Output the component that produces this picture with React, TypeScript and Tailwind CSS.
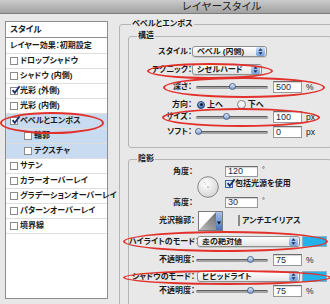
import React from 'react';

type Effect = { label: string; checked?: boolean; sub?: boolean; selected?: boolean };

const effects: Effect[] = [
  { label: 'ドロップシャドウ' },
  { label: 'シャドウ (内側)' },
  { label: '光彩 (外側)', checked: true },
  { label: '光彩 (内側)' },
  { label: 'ベベルとエンボス', checked: true, selected: true },
  { label: '輪郭', sub: true, selected: true },
  { label: 'テクスチャ', sub: true, selected: true },
  { label: 'サテン' },
  { label: 'カラーオーバーレイ' },
  { label: 'グラデーションオーバーレイ' },
  { label: 'パターンオーバーレイ' },
  { label: '境界線' },
];

const CheckMark = () => (
  <svg className="absolute -top-[3px] left-[0px] w-[10px] h-[10px]" viewBox="0 0 10 10">
    <path d="M1.6 5.2 L3.8 7.8 L8.6 1.2" stroke="#1b2d66" strokeWidth="1.8" fill="none" />
  </svg>
);

function Box({ checked, blue }: { checked?: boolean; blue?: boolean }) {
  return (
    <span
      className={`relative shrink-0 w-[8px] h-[8px] border ${
        blue ? 'border-[#3d62a8] bg-[#d9e6f7]' : 'border-[#8a8a8a] bg-white'
      }`}
    >
      {checked && <CheckMark />}
    </span>
  );
}

function Arrows() {
  return (
    <svg width="5" height="7" viewBox="0 0 5 7">
      <path d="M2.5 0.3 L4.6 2.7 L0.4 2.7 Z" fill="#1d2f57" />
      <path d="M2.5 6.7 L4.6 4.3 L0.4 4.3 Z" fill="#1d2f57" />
    </svg>
  );
}

function Select({ value, className }: { value: string; className: string }) {
  return (
    <div
      className={`flex items-center h-[11px] rounded-[3px] border border-[#8e8e8e] bg-gradient-to-b from-white to-[#e4e4e4] shadow-[0_1px_0_rgba(0,0,0,0.12)] ${className}`}
    >
      <span className="flex-1 pl-[4px] leading-none font-bold whitespace-nowrap overflow-hidden">{value}</span>
      <span className="w-[9px] h-[9px] mr-[1px] rounded-[2px] bg-gradient-to-b from-[#cfe2f8] to-[#6f9fdc] flex items-center justify-center">
        <Arrows />
      </span>
    </div>
  );
}

function Slider({ pct }: { pct: number }) {
  return (
    <div className="relative shrink-0 w-[72px] h-[12px]">
      <div className="absolute left-0 right-0 top-[5px] h-[3px] rounded-full bg-[#a3a3a3] border-t border-[#5f5f5f]" />
      <div
        className="absolute top-[2px] -ml-[3.5px] w-[7px] h-[7px] rounded-full border border-[#4b638c] bg-gradient-to-b from-[#e2ecf8] to-[#7c9ccb]"
        style={{ left: `${pct}%` }}
      />
    </div>
  );
}

function Field({ value, className }: { value: string; className: string }) {
  return (
    <div
      className={`shrink-0 flex items-center pl-[2px] bg-white border border-[#999] border-t-[#6c6c6c] shadow-[inset_0_1px_1px_rgba(0,0,0,0.18)] text-[9px] leading-none text-[#1e2a44] ${className}`}
    >
      {value}
    </div>
  );
}

function SliderRow({
  label,
  labelW,
  pct,
  value,
  unit,
  className,
}: {
  label: string;
  labelW: string;
  pct: number;
  value: string;
  unit: string;
  className: string;
}) {
  return (
    <div className={`flex items-center h-[12px] ${className}`}>
      <span className={`shrink-0 text-right font-bold leading-none ${labelW}`}>{label}</span>
      <div className={labelW === 'w-[63px]' ? 'ml-[4px]' : 'ml-[1px]'}>
        <Slider pct={pct} />
      </div>
      <Field value={value} className="ml-[5px] w-[29px] h-[12px]" />
      <span className="ml-[4px] leading-none text-[8.5px]">{unit}</span>
    </div>
  );
}

function Dial() {
  return (
    <svg width="22" height="22" viewBox="0 0 22 22">
      <defs>
        <radialGradient id="dialg" cx="40%" cy="35%" r="70%">
          <stop offset="0" stopColor="#ffffff" />
          <stop offset="1" stopColor="#d4d4d4" />
        </radialGradient>
      </defs>
      <circle cx="11" cy="11" r="10.3" fill="url(#dialg)" stroke="#7b7b7b" strokeWidth="0.9" />
      <circle cx="11" cy="11" r="0.7" fill="#888" />
      <circle cx="8.6" cy="8" r="0.5" fill="#999" />
      <circle cx="7.2" cy="6.3" r="0.5" fill="#999" />
    </svg>
  );
}

function Contour() {
  return (
    <div className="flex h-[20px] border border-[#7a7a7a] bg-white">
      <svg width="17" height="18" viewBox="0 0 17 18">
        <defs>
          <linearGradient id="contg" x1="0" y1="1" x2="1" y2="0">
            <stop offset="0" stopColor="#bdbdbd" />
            <stop offset="1" stopColor="#6c6c6c" />
          </linearGradient>
        </defs>
        <rect width="17" height="18" fill="#fff" />
        <polygon points="0,18 17,0 17,18" fill="url(#contg)" />
      </svg>
      <div className="w-[6px] bg-gradient-to-b from-[#a9c3e8] to-[#4a72b8] flex items-center justify-center pt-[3px]">
        <svg width="4" height="4" viewBox="0 0 4 4">
          <path d="M0 0.5 L4 0.5 L2 3.5 Z" fill="#111" />
        </svg>
      </div>
    </div>
  );
}

export default function App() {
  return (
    <div className="relative w-[330px] h-[304px] overflow-hidden bg-[#e8e8e8] text-[#1b1b1b] text-[8px] font-['Liberation_Sans','Noto_Sans_CJK_JP',sans-serif] [font-feature-settings:'palt']">
      {/* title bar */}
      <div className="h-[14px] bg-gradient-to-b from-[#cbcbcb] to-[#a1a1a1] border-b border-[#7d7d7d] flex items-center justify-center pl-[114px] text-[10.5px] leading-none text-[#202020] tracking-[0.5px]">
        レイヤースタイル
      </div>

      <div className="flex pl-[5px] pt-[5px]">
        {/* left list */}
        <div className="w-[103px] mt-[2px] shrink-0">
          <div className="h-[17px] border border-[#8d8d8d] bg-white flex items-center pl-[4px] font-bold text-[8.5px] leading-none">
            スタイル
          </div>
          <div className="h-[261px] border border-t-0 border-[#8d8d8d] bg-white">
            <div className="h-[16px] flex items-center pl-[4px] border-b border-[#dedede] font-bold leading-none">
              レイヤー効果：初期設定
            </div>
            {effects.map((e) => (
              <div
                key={e.label}
                className={`h-[15px] flex items-center border-b border-[#dedede] font-bold leading-none whitespace-nowrap ${
                  e.sub ? 'pl-[18px]' : 'pl-[4px]'
                } ${e.selected ? 'bg-[#c8dbf1]' : ''}`}
              >
                <Box checked={e.checked} />
                <span className="ml-[2px]">{e.label}</span>
              </div>
            ))}
          </div>
        </div>

        {/* right settings */}
        <fieldset className="ml-[11px] w-[222px] shrink-0 border border-[#b5b5b5] rounded-[3px] px-[8px] pb-[10px]">
          <legend className="ml-[3px] px-[1px] h-[10px] leading-[10px] font-bold">ベベルとエンボス</legend>

          {/* 構造 */}
          <fieldset className="mt-[2px] border border-[#b5b5b5] rounded-[3px] pb-[9px]">
            <legend className="ml-[8px] px-[1px] h-[10px] leading-[10px] font-bold">構造</legend>

            <div className="flex items-center h-[11px] mt-[5px]">
              <span className="w-[63px] shrink-0 text-right font-bold leading-none">スタイル：</span>
              <Select value="ベベル (内側)" className="w-[75px]" />
            </div>
            <div className="flex items-center h-[11px] mt-[7px]">
              <span className="w-[63px] shrink-0 text-right font-bold leading-none">テクニック：</span>
              <Select value="シゼルハード" className="w-[70px]" />
            </div>
            <SliderRow label="深さ：" labelW="w-[63px]" pct={51} value="500" unit="%" className="mt-[6px]" />
            <div className="flex items-center h-[11px] mt-[6px] font-bold leading-none">
              <span className="w-[63px] shrink-0 text-right">方向：</span>
              <span className="ml-[5px] w-[8px] h-[8px] rounded-full border border-[#233c6e] bg-gradient-to-b from-[#9fbde6] to-[#3f6db4] flex items-center justify-center">
                <span className="w-[3px] h-[3px] rounded-full bg-[#0d1a33]" />
              </span>
              <span className="ml-[2px]">上へ</span>
              <span className="ml-[14px] w-[9px] h-[9px] rounded-full border border-[#7f7f7f] bg-gradient-to-b from-white to-[#e6e6e6]" />
              <span className="ml-[2px]">下へ</span>
            </div>
            <SliderRow label="サイズ：" labelW="w-[63px]" pct={43} value="100" unit="px" className="mt-[1px]" />
            <SliderRow label="ソフト：" labelW="w-[63px]" pct={3} value="0" unit="px" className="mt-[3px]" />
          </fieldset>

          {/* 陰影 */}
          <fieldset className="mt-[6px] border border-[#b5b5b5] rounded-[3px] pb-[10px]">
            <legend className="ml-[8px] px-[1px] h-[10px] leading-[10px] font-bold">陰影</legend>

            <div className="flex mt-[2px]">
              <div className="w-[64px] shrink-0 text-right font-bold leading-none">
                <div className="h-[11px] flex items-center justify-end">角度：</div>
                <div className="h-[11px] mt-[20px] flex items-center justify-end">高度：</div>
              </div>
              <div className="ml-[4px] mt-[10px]">
                <Dial />
              </div>
              <div className="ml-[6px]">
                <div className="flex items-start h-[11px]">
                  <Field value="120" className="w-[33px] h-[11px]" />
                  <span className="ml-[4px] text-[7px] leading-none">°</span>
                </div>
                <div className="flex items-center h-[10px] mt-[2px] font-bold leading-none">
                  <Box checked blue />
                  <span className="ml-[2px]">包括光源を使用</span>
                </div>
                <div className="flex items-start h-[11px] mt-[8px]">
                  <Field value="30" className="w-[33px] h-[11px]" />
                  <span className="ml-[4px] text-[7px] leading-none">°</span>
                </div>
              </div>
            </div>

            <div className="flex items-center h-[20px] mt-[3px] font-bold leading-none">
              <span className="w-[66px] shrink-0 text-right">光沢輪郭：</span>
              <div className="ml-[3px]">
                <Contour />
              </div>
              <span className="ml-[15px]">
                <Box />
              </span>
              <span className="ml-[2px]">アンチエイリアス</span>
            </div>

            <div className="flex items-center h-[11px] mt-[5px]">
              <span className="w-[66px] shrink-0 text-right font-bold leading-none whitespace-nowrap">ハイライトのモード：</span>
              <Select value="差の絶対値" className="ml-[2px] w-[103px]" />
              <span className="ml-[2px] w-[25px] h-[11px] bg-[#23b2ea] border border-[#8fb0c4]" />
            </div>
            <SliderRow label="不透明度：" labelW="w-[66px]" pct={75} value="75" unit="%" className="mt-[7px]" />
            <div className="flex items-center h-[11px] mt-[5px]">
              <span className="w-[66px] shrink-0 text-right font-bold leading-none whitespace-nowrap">シャドウのモード：</span>
              <Select value="ビビッドライト" className="ml-[2px] w-[103px]" />
              <span className="ml-[2px] w-[25px] h-[11px] bg-[#23b2ea] border border-[#8fb0c4]" />
            </div>
            <SliderRow label="不透明度：" labelW="w-[66px]" pct={75} value="75" unit="%" className="mt-[3px]" />
          </fieldset>
        </fieldset>
      </div>

      {/* red highlight ellipses */}
      <div className="absolute left-[0px] top-[112px] w-[104px] h-[22px] rounded-[50%] border-2 border-[#e2302b]" />
      <div className="absolute left-[147px] top-[63px] w-[126px] h-[16px] rounded-[50%] border-2 border-[#e2302b]" />
      <div className="absolute left-[163px] top-[77px] w-[162px] h-[21px] rounded-[50%] border-2 border-[#e2302b]" />
      <div className="absolute left-[162px] top-[108px] w-[158px] h-[19px] rounded-[50%] border-2 border-[#e2302b]" />
      <div className="absolute left-[123px] top-[231px] w-[205px] h-[21px] rounded-[50%] border-2 border-[#e2302b]" />
      <div className="absolute left-[123px] top-[270px] w-[208px] h-[15px] rounded-[50%] border-2 border-[#e2302b]" />
    </div>
  );
}
